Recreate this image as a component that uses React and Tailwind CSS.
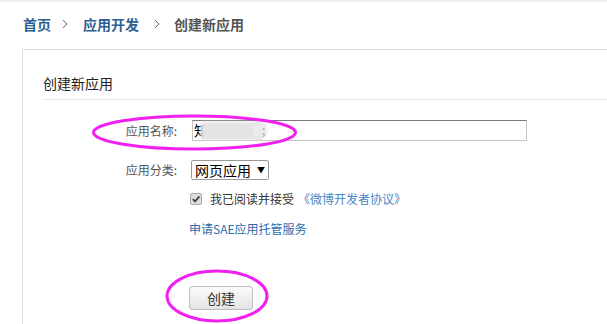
function Chevron() {
  return (
    <svg width="6" height="10" viewBox="0 0 6 10" className="shrink-0">
      <path d="M0.8 1 L5 5 L0.8 9" fill="none" stroke="#666" strokeWidth="1" />
    </svg>
  );
}

export default function App() {
  const font = { fontFamily: '"Noto Sans CJK SC", "Noto Sans", sans-serif' };
  return (
    <div className="relative w-[607px] h-[324px] overflow-hidden bg-white" style={font}>
      <div className="h-[2px] bg-[#f0f0f0]" />
      <div className="flex items-center pl-[23px] pt-[11px] h-[33px] text-[14px] leading-[20px] font-bold">
        <span className="text-[#2d5f93]">首页</span>
        <span className="ml-[11px] mr-[15px] flex items-center"><Chevron /></span>
        <span className="text-[#2d5f93]">应用开发</span>
        <span className="ml-[15px] mr-[14px] flex items-center"><Chevron /></span>
        <span className="text-[#555]">创建新应用</span>
      </div>
      <div className="ml-[22px] mt-[14px] w-[700px] h-[400px] border-l border-t border-[#dcdcdc] pl-[20px]">
        <div className="pt-[23px] pb-[6px] border-b border-[#e6e6e6] text-[14px] leading-[20px] text-[#222]">
          创建新应用
        </div>
        <div className="flex items-center mt-[20px]">
          <div className="w-[134px] text-right text-[12px] text-[#555]">应用名称:</div>
          <div className="relative ml-[15px] w-[335px] h-[21px] border border-[#c8c4c0] border-t-[#7a7a7a] flex items-center pl-[1px] text-[14px] text-black">
            <span>知</span>
            <div className="absolute left-[8px] top-[1px] w-[62px] h-[18px] bg-[#e3e3e3] blur-[1.5px]" />
            <div className="absolute left-[60px] top-[3px] w-[14px] h-[12px] bg-[#ebebeb] blur-[1px]" />
            <span className="absolute left-[69px] top-[0px] text-[12px] text-[#999]">;</span>
          </div>
        </div>
        <div className="flex items-center mt-[19px]">
          <div className="w-[134px] text-right text-[12px] text-[#555]">应用分类:</div>
          <div className="ml-[14px] w-[78px] h-[20px] border border-[#9a9a9a] rounded-[2px] flex items-center pl-[3px] text-[14px] leading-[18px] text-black">
            <span>网页应用</span>
            <span className="ml-[6px] text-[8px] leading-[18px]">▼</span>
          </div>
        </div>
        <div className="flex items-center mt-[11px] ml-[147px] h-[16px] text-[12px] leading-[16px]">
          <div className="w-[12px] h-[12px] border border-[#a9a9a9] bg-[#dedede] rounded-[2px] flex items-center justify-center">
            <svg width="10" height="10" viewBox="0 0 10 10">
              <path d="M1.8 5.2 L4 7.4 L8.4 2.4" fill="none" stroke="#444" strokeWidth="1.8" />
            </svg>
          </div>
          <span className="ml-[8px] text-[#333]">我已阅读并接受</span>
          <span className="ml-[4px] text-[#4a86c5]">《微博开发者协议》</span>
        </div>
        <div className="mt-[12px] ml-[146px] text-[12px] leading-[20px] text-[#2b6cae]">申请SAE应用托管服务</div>
        <div className="mt-[47px] ml-[146px] w-[64px] h-[24px] border border-[#bdbdbd] rounded-[3px] bg-gradient-to-b from-[#fbfbfb] to-[#e4e4e4] flex items-center justify-center text-[14px] text-[#333]">
          创建
        </div>
      </div>
      <svg className="absolute left-0 top-0 pointer-events-none" width="607" height="324">
        <ellipse cx="194.5" cy="132.5" rx="101" ry="16.5" fill="none" stroke="#f020f0" strokeWidth="3" />
        <ellipse cx="217" cy="296" rx="50" ry="25" fill="none" stroke="#f020f0" strokeWidth="3" />
      </svg>
    </div>
  );
}
